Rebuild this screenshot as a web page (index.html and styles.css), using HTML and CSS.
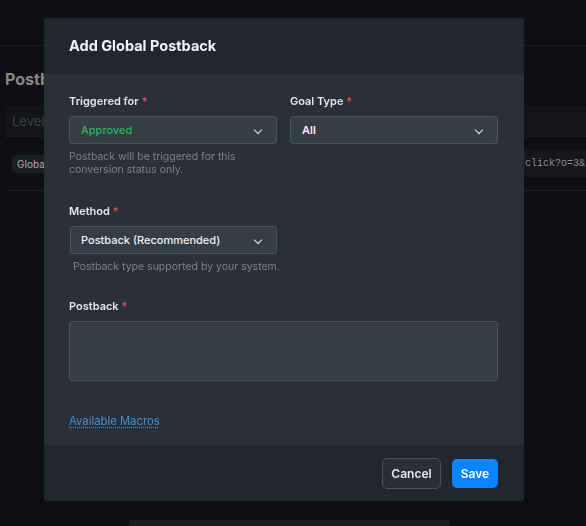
FILE: index.html
```html
<!doctype html>
<html>
<head>
<meta charset="utf-8">
<title>Postbacks</title>
<link rel="stylesheet" href="styles.css">
</head>

<body>
<div class="page">
	<div class="topbar"></div>
	<div class="content">
		<h2 class="title">Postbacks</h2>
		<div class="filter"><span>Level</span></div>
		<div class="row">
			<span class="badge">Global</span>
			<span class="code">/click?o=3&amp;</span>
		</div>
		<div class="bottomBar"></div>
	</div>
</div>

<div class="overlay">
	<div class="modal">
		<div class="modalHead">Add Global Postback</div>
		<div class="modalBody">
			<div class="cols">
				<div class="field">
					<label>Triggered for <i>*</i></label>
					<div class="select green">Approved<span class="arrow"></span></div>
					<p class="help">Postback will be triggered for this conversion status only.</p>
				</div>
				<div class="field">
					<label>Goal Type <i>*</i></label>
					<div class="select">All<span class="arrow"></span></div>
				</div>
			</div>
			<div class="cols method">
				<div class="field">
					<label>Method <i>*</i></label>
					<div class="select shift">Postback (Recommended)<span class="arrow"></span></div>
					<p class="help indent">Postback type supported by your system.</p>
				</div>
			</div>
			<div class="field postback">
				<label>Postback <i>*</i></label>
				<div class="textarea"></div>
			</div>
			<a class="macros" href="#">Available Macros</a>
		</div>
		<div class="modalFoot">
			<button class="btn cancel">Cancel</button>
			<button class="btn save">Save</button>
		</div>
	</div>
</div>
</body>
</html>
```

FILE: styles.css
```css
*{
	margin: 0;
	padding: 0;
	box-sizing: border-box;
}
body{
	background-color: #0e0f13;
	font-family: Inter, "Liberation Sans", sans-serif;
	overflow: hidden;
}
/* page behind the dialog (already dimmed) */
.topbar{
	height: 46px;
	border-bottom: 1px solid #1a1c21;
}
.content{
	padding: 0 0 0 5px;
}
.title{
	margin-top: 22px;
	font-size: 16px;
	font-weight: 700;
	color: #8a8782;
	line-height: 22px;
}
.filter{
	margin-top: 16px;
	height: 31px;
	background-color: #121418;
	border-bottom: 1px solid #1a1c21;
	padding-left: 7px;
	line-height: 31px;
	font-size: 13px;
	color: #3b3f46;
}
.row{
	height: 54px;
	border-bottom: 1px solid #1c1e23;
	display: flex;
	align-items: center;
	justify-content: space-between;
	padding-left: 7px;
}
.badge{
	background-color: #1b1e23;
	color: #9a9b9d;
	font-size: 10px;
	font-weight: 500;
	padding: 3px 5px;
	border-radius: 3px;
}
.code{
	font-family: "Liberation Mono", monospace;
	font-size: 10px;
	color: #8d8f94;
	background-color: #15171b;
	padding: 8px 1px 8px 0;
	white-space: nowrap;
}
.bottomBar{
	margin: 329px 0 0 124px;
	width: 321px;
	height: 20px;
	background-color: #1c1d21;
	border-radius: 3px;
}

/* dialog */
.overlay{
	position: fixed;
	left: 0;
	top: 0;
	right: 0;
	bottom: 0;
}
.modal{
	position: absolute;
	left: 44px;
	top: 18px;
	width: 480px;
	border-radius: 4px;
	overflow: hidden;
	background-color: #2b2f38;
}
.modalHead{
	height: 56px;
	background-color: #22262f;
	padding-left: 25px;
	line-height: 56px;
	font-size: 14.5px;
	font-weight: 700;
	color: #f2f3f5;
}
.modalBody{
	padding: 20px 26px 16px 25px;
}
.cols{
	display: flex;
	gap: 13px;
}
.field{
	flex: 1;
}
label{
	display: block;
	font-size: 11px;
	font-weight: 600;
	color: #e3e4e7;
	line-height: 15px;
	margin-bottom: 7px;
}
label i{
	font-style: normal;
	color: #e5484d;
}
.select{
	position: relative;
	height: 28px;
	border: 1px solid #4b525c;
	border-radius: 3px;
	background-color: #353d47;
	padding-left: 11px;
	line-height: 26px;
	font-size: 11px;
	font-weight: 600;
	color: #f0f1f3;
}
.select.green{
	color: #2fb35f;
	font-weight: 500;
}
.select.shift{
	width: 207px;
	margin-left: 1px;
	padding-left: 10px;
	font-weight: 500;
}
.arrow{
	position: absolute;
	right: 15px;
	top: 10px;
	width: 6px;
	height: 6px;
	border-right: 1.6px solid #e8e9eb;
	border-bottom: 1.6px solid #e8e9eb;
	transform: rotate(45deg);
}
.help{
	margin-top: 6px;
	font-size: 10.5px;
	line-height: 13px;
	color: #7c8089;
	padding-right: 30px;
}
.help.indent{
	padding: 0 0 0 4px;
	white-space: nowrap;
}
.method{
	margin-top: 28px;
}
.method .field{
	flex: 0 0 208px;
}
.postback{
	margin-top: 26px;
}
.textarea{
	height: 60px;
	border: 1px solid #4b525c;
	border-radius: 3px;
	background-color: #353d47;
}
.macros{
	display: inline-block;
	margin-top: 33px;
	font-size: 11.3px;
	color: #3d91d8;
	text-decoration: underline dotted;
	text-underline-offset: 2px;
}
.modalFoot{
	height: 56px;
	background-color: #22262f;
	display: flex;
	align-items: center;
	justify-content: flex-end;
	padding-right: 26px;
	gap: 11px;
}
.btn{
	font-family: Inter, "Liberation Sans", sans-serif;
	font-size: 12px;
	font-weight: 600;
	border-radius: 5px;
	cursor: pointer;
}
.cancel{
	width: 59px;
	height: 31px;
	background-color: #2a2e37;
	border: 1px solid #4b505a;
	color: #e6e7ea;
}
.save{
	width: 46px;
	height: 29px;
	background-color: #0a84ff;
	border: none;
	color: #fff;
}
```
